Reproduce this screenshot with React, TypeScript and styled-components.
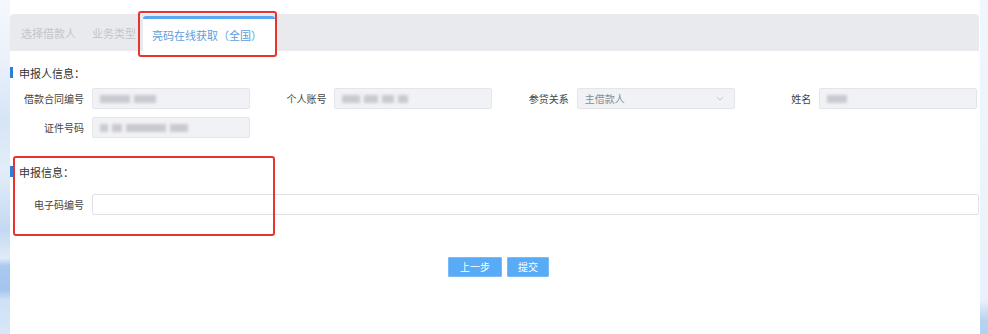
import React from 'react';
import styled, { createGlobalStyle } from 'styled-components';

const GlobalStyle = createGlobalStyle`
  html, body {
    margin: 0;
    padding: 0;
    background: #eef4fb;
    font-family: "Noto Sans CJK SC", "Noto Sans", sans-serif;
  }
`;

interface FieldItem {
  label: string;
  kind: 'text' | 'select';
  value?: string;
  mosaic?: number[];
}

const ROW_ONE: FieldItem[] = [
  { label: '借款合同编号', kind: 'text', mosaic: [30, 22] },
  { label: '个人账号', kind: 'text', mosaic: [18, 14, 12, 10] },
  { label: '参贷关系', kind: 'select', value: '主借款人' },
  { label: '姓名', kind: 'text', mosaic: [20] },
];

const ROW_TWO: FieldItem[] = [{ label: '证件号码', kind: 'text', mosaic: [8, 10, 40, 18] }];

const App = () => {
  const renderField = (field: FieldItem, i: number) => (
    <Field key={i}>
      <Label>{field.label}</Label>
      {field.kind === 'select' ? (
        <ReadonlyBox>
          <SelectText>{field.value}</SelectText>
          <Chevron viewBox="0 0 10 6" width="8" height="5">
            <path d="M1 1l4 4 4-4" fill="none" stroke="#c4c7cc" strokeWidth="1.2" />
          </Chevron>
        </ReadonlyBox>
      ) : (
        <ReadonlyBox>
          {field.mosaic?.map((w, j) => (
            <Mosaic key={j} $width={w} />
          ))}
        </ReadonlyBox>
      )}
    </Field>
  );

  return (
    <>
      <GlobalStyle />
      <Page>
        <LeftStrip />
        <Panel>
          <TabBar>
            <Tab>选择借款人</Tab>
            <Tab $clip={51}>业务类型</Tab>
            <ActiveTab>亮码在线获取（全国）</ActiveTab>
          </TabBar>

          <Section>
            <SectionTitle>申报人信息：</SectionTitle>
            <Grid>{ROW_ONE.map(renderField)}</Grid>
            <Grid>{ROW_TWO.map(renderField)}</Grid>
          </Section>

          <Section $top={27}>
            <SectionTitle>申报信息：</SectionTitle>
            <WideField>
              <Label>电子码编号</Label>
              <CodeInput />
            </WideField>
          </Section>

          <ButtonRow>
            <Button>上一步</Button>
            <Button>提交</Button>
          </ButtonRow>

          <Highlight $left={128} $top={11} $width={139} $height={46} />
          <Highlight $left={3} $top={156} $width={262} $height={80} />
        </Panel>
        <RightStrip />
      </Page>
    </>
  );
};

export default App;

const Page = styled.div`
  display: flex;
  width: 988px;
  height: 334px;
  overflow: hidden;
`;

const LeftStrip = styled.div`
  width: 10px;
  flex-shrink: 0;
  background: linear-gradient(
    180deg,
    #f4f8fc 0px,
    #eaf1fa 60px,
    #d6e5f7 120px,
    #e3edf9 170px,
    #c3d9f3 230px,
    #e0ebf8 258px,
    #a9c9f0 266px,
    #a4c5ef 290px,
    #cfe1f6 300px,
    #d8e7f8 334px
  );
`;

const RightStrip = styled.div`
  width: 8px;
  flex-shrink: 0;
  background: linear-gradient(180deg, #f1f6fc 0px, #e9f1fa 300px, #b9d4f2 320px, #b3d0f1 334px);
`;

const Panel = styled.div`
  position: relative;
  width: 970px;
  flex-shrink: 0;
  background: #ffffff;
  padding-top: 14px;
  box-sizing: border-box;
`;

const TabBar = styled.div`
  display: flex;
  align-items: flex-end;
  height: 37px;
  width: 969px;
  padding-left: 11px;
  box-sizing: border-box;
  background: #e9eaee;
  border-radius: 4px 4px 0 0;
`;

const Tab = styled.div<{ $clip?: number }>`
  height: 35px;
  line-height: 35px;
  margin-right: 16px;
  font-size: 11px;
  color: #c3c5cb;
  white-space: nowrap;
  overflow: hidden;
  ${({ $clip }) => ($clip ? `width: ${$clip}px; margin-right: 0;` : '')}
`;

const ActiveTab = styled.div`
  width: 132px;
  height: 35px;
  box-sizing: border-box;
  padding-left: 9px;
  line-height: 33px;
  background: #ffffff;
  border-top: 3px solid #5aa8ef;
  border-radius: 3px 3px 0 0;
  font-size: 11px;
  color: #5c9edc;
  white-space: nowrap;
`;

const Section = styled.div<{ $top?: number }>`
  margin-top: ${({ $top }) => $top ?? 15}px;
`;

const SectionTitle = styled.div`
  position: relative;
  height: 14px;
  line-height: 14px;
  padding-left: 9px;
  font-size: 11px;
  color: #333;

  &::before {
    content: '';
    position: absolute;
    left: 0;
    top: 1px;
    width: 3px;
    height: 11px;
    background: #2f7fd6;
  }
`;

const Grid = styled.div`
  display: grid;
  grid-template-columns: repeat(4, 240px);
  column-gap: 2.4px;
  margin-top: 8px;

  & + & {
    margin-top: 8px;
  }
`;

const Field = styled.div`
  display: flex;
  align-items: center;
  height: 21px;
`;

const Label = styled.div`
  width: 74px;
  flex-shrink: 0;
  margin-right: 8px;
  text-align: right;
  font-size: 10px;
  color: #444;
  white-space: nowrap;
`;

const ReadonlyBox = styled.div`
  display: flex;
  align-items: center;
  gap: 4px;
  flex: 1;
  height: 21px;
  padding: 0 7px;
  box-sizing: border-box;
  background: #f1f2f5;
  border: 1px solid #e3e5e9;
  border-radius: 2px;
  overflow: hidden;
`;

const Mosaic = styled.span<{ $width: number }>`
  display: inline-block;
  width: ${({ $width }) => $width}px;
  height: 8px;
  background: #c9cacf;
  filter: blur(1.6px);
`;

const SelectText = styled.span`
  flex: 1;
  font-size: 10px;
  color: #8a8d93;
`;

const Chevron = styled.svg`
  margin-right: 3px;
`;

const WideField = styled(Field)`
  margin-top: 15px;
`;

const CodeInput = styled.input`
  flex: 1;
  height: 21px;
  margin-right: 1px;
  box-sizing: border-box;
  border: 1px solid #dfe1e6;
  border-radius: 2px;
  background: #ffffff;
  outline: none;
`;

const ButtonRow = styled.div`
  display: flex;
  justify-content: center;
  gap: 5px;
  margin-top: 42px;
  padding-left: 7px;
`;

const Button = styled.button`
  height: 20px;
  padding: 0 10px;
  border: 1px solid #79bbf7;
  border-radius: 1px;
  background: #5aabf5;
  color: #ffffff;
  font-family: "Noto Sans CJK SC", sans-serif;
  font-size: 10px;
  line-height: 18px;
  cursor: pointer;

  &:first-child {
    padding: 0 11px;
  }
`;

const Highlight = styled.div<{ $left: number; $top: number; $width: number; $height: number }>`
  position: absolute;
  left: ${({ $left }) => $left}px;
  top: ${({ $top }) => $top}px;
  width: ${({ $width }) => $width}px;
  height: ${({ $height }) => $height}px;
  box-sizing: border-box;
  border: 2px solid #e8332f;
  border-radius: 3px;
  pointer-events: none;
`;
